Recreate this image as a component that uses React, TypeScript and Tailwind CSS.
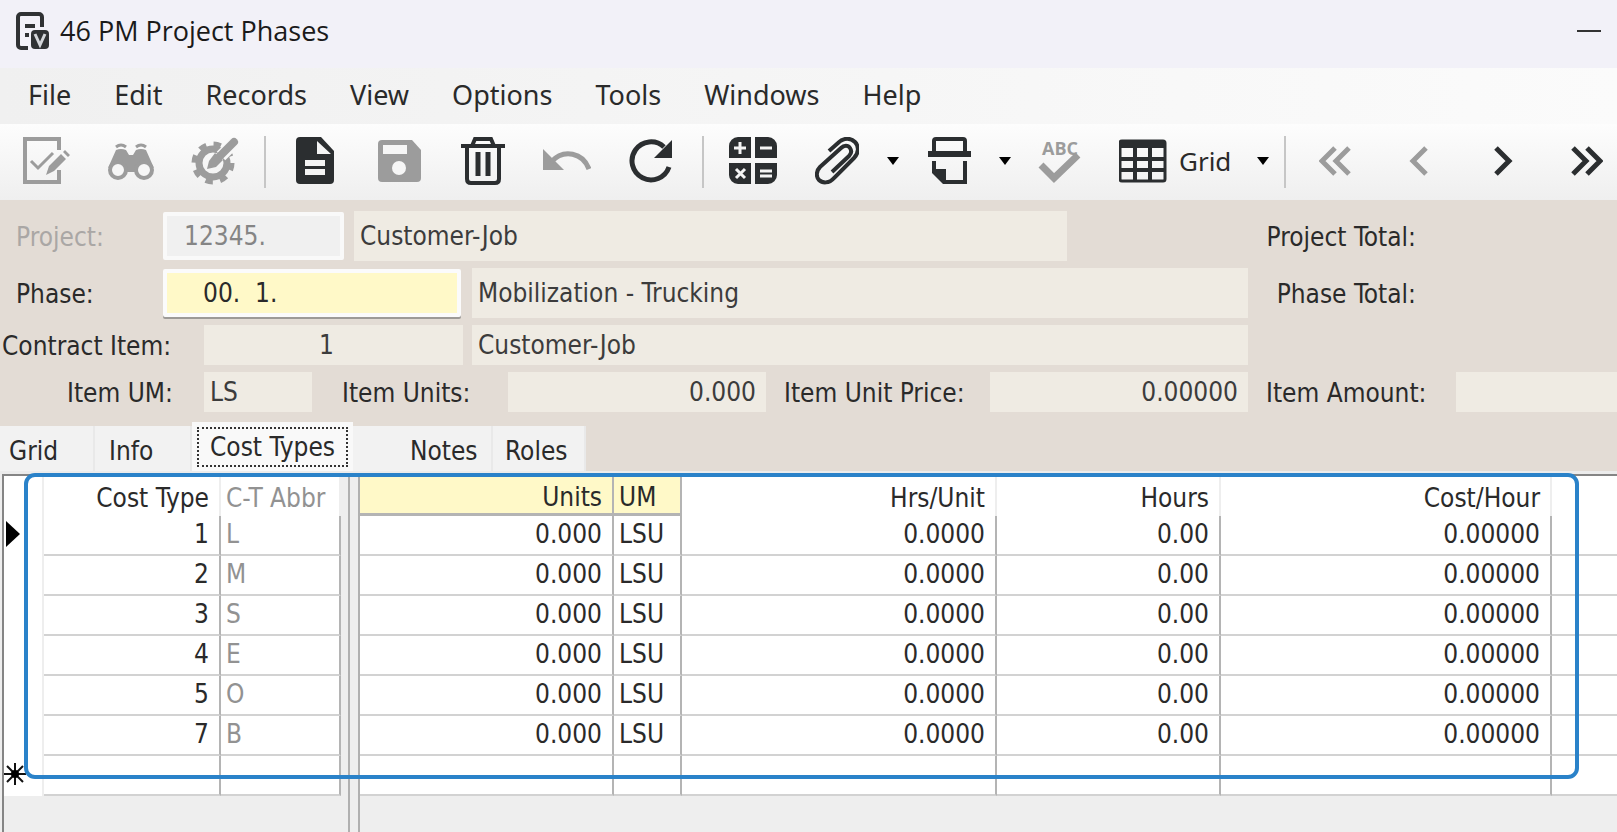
import React from 'react';
import { clsx } from 'clsx';

const menus = ['File', 'Edit', 'Records', 'View', 'Options', 'Tools', 'Windows', 'Help'];

const costTypes = [
  { id: 1, abbr: 'L' },
  { id: 2, abbr: 'M' },
  { id: 3, abbr: 'S' },
  { id: 4, abbr: 'E' },
  { id: 5, abbr: 'O' },
  { id: 7, abbr: 'B' },
];

type IconProps = { children: React.ReactNode; muted?: boolean; width?: number };

const Icon = ({ children, muted, width = 48 }: IconProps) => (
  <svg
    width={width}
    height="48"
    viewBox={`0 0 ${width} 48`}
    fill="none"
    className={clsx('shrink-0', muted ? 'text-[#9c9c9c]' : 'text-[#2b2e30]')}
    aria-hidden="true"
  >
    {children}
  </svg>
);

const AppIcon = () => (
  <svg width="34" height="38" viewBox="0 0 34 38" fill="none" aria-hidden="true">
    <path d="M26 15V5a3 3 0 0 0-3-3H5a3 3 0 0 0-3 3v28a3 3 0 0 0 3 3h7" stroke="#303234" strokeWidth="4" />
    <path d="M9 14h10M9 23h4" stroke="#303234" strokeWidth="4" />
    <rect x="15" y="18" width="18" height="19" rx="4" fill="#303234" />
    <path d="m19 22 5 11 5-11" stroke="#d4d6da" strokeWidth="3" />
  </svg>
);

const EditIcon = () => (
  <Icon muted>
    <path d="M36 13V2H2v43h34V33" stroke="currentColor" strokeWidth="4" />
    <path d="m8 24 7 7 15-15" stroke="currentColor" strokeWidth="3" />
    <path d="m23 38 3-9 12-12 5 5-12 12zM40 15l2-2 5 5-2 2z" fill="currentColor" />
  </Icon>
);

const FindIcon = () => (
  <Icon muted>
    <path d="M9 10q5-4 10 0M29 10q5-4 10 0" stroke="currentColor" strokeWidth="3" />
    <path d="M9 13q5-2 10 0l3 5h4l3-5q5-2 10 0l8 18-10-4-9 8h-8l-9-8-10 4z" fill="currentColor" />
    <circle cx="11" cy="33" r="8" fill="#f6f6f6" stroke="currentColor" strokeWidth="4" />
    <circle cx="37" cy="33" r="8" fill="#f6f6f6" stroke="currentColor" strokeWidth="4" />
  </Icon>
);

const SetupIcon = () => (
  <Icon muted>
    <circle cx="22" cy="26" r="14" stroke="currentColor" strokeWidth="7" />
    <circle cx="22" cy="26" r="19" stroke="currentColor" strokeWidth="5" strokeDasharray="7.460 7.460" />
    <path d="M44 5 30 19" stroke="#f8f8f8" strokeWidth="12" />
    <path d="M43 5 28 20" stroke="currentColor" strokeWidth="8" strokeLinecap="round" />
    <path d="m24 16 8 7-7 7-9 2 2-8z" fill="currentColor" />
  </Icon>
);

const NewIcon = () => (
  <Icon width={38}>
    <path d="M4 0h21l13 14v29a4 4 0 0 1-4 4H4a4 4 0 0 1-4-4V4a4 4 0 0 1 4-4z" fill="currentColor" />
    <path d="M21 4v13h14zM9 23h20v6H9zM9 32h20v6H9z" fill="#f4f4f4" />
  </Icon>
);

const SaveIcon = () => (
  <Icon muted width={43}>
    <path d="M4 3h30l9 10v28a4 4 0 0 1-4 4H4a4 4 0 0 1-4-4V7a4 4 0 0 1 4-4z" fill="currentColor" />
    <path d="M5 8h24v9H5z" fill="#f6f6f6" />
    <circle cx="21" cy="31" r="7" fill="#f6f6f6" />
  </Icon>
);

const DeleteIcon = () => (
  <Icon width={44}>
    <path d="M0 9h44M11 9l3-7h16l3 7" stroke="currentColor" strokeWidth="4" />
    <path d="M6 10v32q0 4 4 4h24q4 0 4-4V10" stroke="currentColor" strokeWidth="4" />
    <path d="M17 15v24M27 15v24" stroke="currentColor" strokeWidth="5" />
  </Icon>
);

const UndoIcon = () => (
  <Icon muted>
    <path d="M0 12v21h21z" fill="currentColor" />
    <path d="M8 25C21 11 40 16 46 32" stroke="currentColor" strokeWidth="5" />
  </Icon>
);

const RefreshIcon = () => (
  <Icon width={44}>
    <path d="M35 10A19 19 0 1 0 40 30" stroke="currentColor" strokeWidth="5" />
    <path d="M43 3v18H25z" fill="currentColor" />
  </Icon>
);

const CalcIcon = () => (
  <Icon>
    <path
      d="M9 0h13v21H0V9a9 9 0 0 1 9-9zM26 0h13a9 9 0 0 1 9 9v12H26zM0 26h22v21H9a9 9 0 0 1-9-9zM26 26h22v12a9 9 0 0 1-9 9H26z"
      fill="currentColor"
    />
    <path d="M5 11h12M11 5v12M31 11h12M31 34h12M31 39h12M7 32l9 9M16 32l-9 9" stroke="#f4f4f4" strokeWidth="3" />
  </Icon>
);

const AttachIcon = () => (
  <Icon width={44}>
    <path
      d="m14 14 9-8C29 0 36 1 40 5s4 11-1 16L19 41c-5 6-12 5-15 2s-3-9 1-13l21-19c3-3 7-3 9 0s1 6-1 8L17 35"
      stroke="currentColor"
      strokeWidth="4"
    />
  </Icon>
);

const PrintIcon = () => (
  <Icon width={43}>
    <path d="M6 15V4q0-2 2-2h27q2 0 2 2v11" stroke="currentColor" strokeWidth="4" />
    <path d="M0 14h43v6H0z" fill="currentColor" />
    <path d="M6 24v10M37 24v21H17" stroke="currentColor" strokeWidth="4" />
    <path d="M4 32h14v15h-3L4 36z" fill="currentColor" />
  </Icon>
);

const SpellIcon = () => (
  <Icon muted>
    <path d="m4 28 13 13 24-23" stroke="currentColor" strokeWidth="7" />
    <text x="5" y="18" fontSize="18" fontWeight="700" fill="currentColor" className="font-['Open_Sans',sans-serif]">
      ABC
    </text>
  </Icon>
);

const GridIcon = () => (
  <Icon>
    <rect x="1" y="4" width="45" height="40" rx="2" stroke="currentColor" strokeWidth="3" />
    <path d="M1 4h45v7H1z" fill="currentColor" />
    <path d="M16 10v34M31 10v34M1 22h45M1 33h45" stroke="currentColor" strokeWidth="4" />
  </Icon>
);

const Chevrons = ({ left, double, muted }: { left?: boolean; double?: boolean; muted?: boolean }) => (
  <Icon muted={muted} width={32}>
    {double ? (
      <path d={left ? 'M16 11 3 24l13 13M30 11 17 24l13 13' : 'm2 11 13 13L2 37M16 11l13 13-13 13'} stroke="currentColor" strokeWidth="5" />
    ) : (
      <path d={left ? 'M23 11 10 24l13 13' : 'm9 11 13 13L9 37'} stroke="currentColor" strokeWidth="5" />
    )}
  </Icon>
);

const ToolButton = ({ label, disabled, children }: { label: string; disabled?: boolean; children: React.ReactNode }) => (
  <button type="button" aria-label={label} disabled={disabled} className="flex w-[84px] shrink-0 items-center justify-center pb-[3px]">
    {children}
  </button>
);

const Caret = ({ label }: { label: string }) => (
  <button type="button" aria-label={label} className="flex w-7 shrink-0 items-center justify-center pb-[2px]">
    <svg width="12" height="8" viewBox="0 0 12 8" aria-hidden="true">
      <path d="M0 0h12L6 8z" fill="#000" />
    </svg>
  </button>
);

const Divider = () => (
  <div className="flex w-4 shrink-0 justify-center">
    <div className="h-[52px] w-[2px] bg-[#c6c6c6]" />
  </div>
);

const Toolbar = () => (
  <div className="flex items-center overflow-hidden bg-linear-to-b from-[#fdfdfd] to-[#efefef] py-3 pl-[5px]">
    <ToolButton label="Validate" disabled><EditIcon /></ToolButton>
    <ToolButton label="Find" disabled><FindIcon /></ToolButton>
    <ToolButton label="Setup" disabled><SetupIcon /></ToolButton>
    <Divider />
    <ToolButton label="New"><NewIcon /></ToolButton>
    <ToolButton label="Save" disabled><SaveIcon /></ToolButton>
    <ToolButton label="Delete"><DeleteIcon /></ToolButton>
    <ToolButton label="Undo" disabled><UndoIcon /></ToolButton>
    <ToolButton label="Refresh"><RefreshIcon /></ToolButton>
    <div className="pl-[2px]"><Divider /></div>
    <ToolButton label="Calculator"><CalcIcon /></ToolButton>
    <ToolButton label="Attachments"><AttachIcon /></ToolButton>
    <Caret label="Attachment options" />
    <ToolButton label="Print"><PrintIcon /></ToolButton>
    <Caret label="Print options" />
    <ToolButton label="Spelling" disabled><SpellIcon /></ToolButton>
    <button type="button" className="flex shrink-0 items-center gap-3 px-4 pb-[3px] font-['Noto_Sans',sans-serif] text-[26px]">
      <GridIcon />
      <span className="w-[54px] text-left">Grid</span>
    </button>
    <Caret label="Grid options" />
    <Divider />
    <ToolButton label="First" disabled><Chevrons left double muted /></ToolButton>
    <ToolButton label="Previous" disabled><Chevrons left muted /></ToolButton>
    <ToolButton label="Next"><Chevrons /></ToolButton>
    <ToolButton label="Last"><Chevrons double /></ToolButton>
  </div>
);

const field = 'block min-w-0 bg-[#efebe3] px-[6px] text-[#3c3c3c] outline-none';
const label = 'shrink-0 pt-[2px] whitespace-nowrap';

const Header = () => (
  <form className="flex flex-col gap-[7px] bg-[#e3dcd5] pt-[11px]">
    <div className="flex h-[50px] items-center">
      <label htmlFor="project" className={clsx(label, 'w-[163px] pl-4 text-[#aaa7a5]')}>Project:</label>
      <input id="project" disabled defaultValue="12345." className="h-12 w-[181px] shrink-0 rounded-xs border-4 border-[#f9f9f9] bg-[#f0f0f0] pl-[17px] text-[#858585]" />
      <input aria-label="Project description" readOnly value="Customer-Job" className={clsx(field, 'mr-[181px] ml-[10px] h-[50px] flex-1')} />
      <span className={clsx(label, 'mr-[201px] w-[168px] text-right')}>Project Total:</span>
    </div>
    <div className="flex h-[50px] items-center">
      <label htmlFor="phase" className={clsx(label, 'w-[163px] pl-4')}>Phase:</label>
      <input id="phase" defaultValue="00.  1." className="h-12 w-[298px] shrink-0 rounded-xs border-4 border-[#fbfbfb] bg-[#fff9c8] pl-9 shadow-[0_2px_0_#9d9a97] outline-none" />
      <input aria-label="Phase description" readOnly value="Mobilization - Trucking" className={clsx(field, 'ml-[11px] h-[50px] flex-1')} />
      <span className={clsx(label, 'mr-[201px] w-[168px] text-right')}>Phase Total:</span>
    </div>
    <div className="flex h-10 items-center">
      <label htmlFor="item" className={clsx(label, 'w-[204px] pl-[2px]')}>Contract Item:</label>
      <input id="item" readOnly value="1" className={clsx(field, 'h-10 w-[259px] shrink-0 pr-5 text-center')} />
      <input aria-label="Contract item description" readOnly value="Customer-Job" className={clsx(field, 'mr-[369px] ml-[9px] h-10 flex-1')} />
    </div>
    <div className="flex h-10 items-center">
      <label htmlFor="um" className={clsx(label, 'w-[204px] pl-[67px]')}>Item UM:</label>
      <input id="um" readOnly value="LS" className={clsx(field, 'h-10 w-[108px] shrink-0')} />
      <label htmlFor="units" className={clsx(label, 'w-[196px] pl-[30px]')}>Item Units:</label>
      <input id="units" readOnly value="0.000" className={clsx(field, 'h-10 w-[258px] shrink-0 pr-[10px] text-right')} />
      <label htmlFor="price" className={clsx(label, 'w-[224px] pl-[18px]')}>Item Unit Price:</label>
      <input id="price" readOnly value="0.00000" className={clsx(field, 'h-10 w-[258px] shrink-0 pr-[10px] text-right')} />
      <label htmlFor="amount" className={clsx(label, 'w-[208px] pl-[18px]')}>Item Amount:</label>
      <input id="amount" readOnly value="" className={clsx(field, 'h-10 flex-1')} />
    </div>
    <Tabs />
  </form>
);

const tab = 'h-[45px] border-r-2 border-[#e9e9e9] bg-[#f2f2f2] pt-1 text-left';

const Tabs = () => (
  <div role="tablist" className="mt-[3px] flex items-end border-b-3 border-[#ececec]">
    <button type="button" role="tab" className={clsx(tab, 'w-[95px] pl-[9px]')}>Grid</button>
    <button type="button" role="tab" className={clsx(tab, 'w-[97px] pl-[14px]')}>Info</button>
    <button type="button" role="tab" aria-selected="true" className="h-[49px] w-[161px] bg-[#f9f9f9] px-[5px]">
      <span className="flex h-10 items-center justify-center border-2 border-dotted border-[#333]">Cost Types</span>
    </button>
    <button type="button" role="tab" className={clsx(tab, 'w-[140px] pl-[57px]')}>Notes</button>
    <button type="button" role="tab" className={clsx(tab, 'w-[93px] pl-3')}>Roles</button>
  </div>
);

const th = 'h-10 border-r-2 border-[#eee] pt-1 font-normal leading-none';
const thEdit = 'h-10 border-r-2 border-b-3 border-[#b4b4b4] bg-[#fff9c8] pt-1 font-normal leading-none';
const td = 'h-10 border-r-2 border-b-2 border-r-[#b4b4b4] border-b-[#d2d2d2] pb-[2px] leading-none';
const num = 'px-[10px] text-right';
const txt = 'px-[5px] text-left';
const table = 'table-fixed border-separate border-spacing-0 bg-white';

const CostTypeGrid = () => (
  <div className="relative ml-[2px] flex flex-1 border-t-2 border-l-2 border-[#858585] bg-[#eee]">
    <div className="w-[344px] shrink-0">
      <table className={clsx(table, 'w-[337px]')}>
        <thead>
          <tr>
            <th aria-label="Row" className="w-10 border-r-2 border-[#eee]" />
            <th className={clsx(th, num, 'w-[177px]')}>Cost Type</th>
            <th className={clsx(th, txt, 'w-[120px] text-[#929292]')}>C-T Abbr</th>
          </tr>
        </thead>
        <tbody>
          {costTypes.map((row, index) => (
            <tr key={row.id}>
              <td className="border-r-2 border-[#eee]">
                {index === 0 && (
                  <svg width="14" height="26" viewBox="0 0 14 26" className="mb-1 ml-[2px]" aria-hidden="true">
                    <path d="M0 0v26l14-13z" fill="#000" />
                  </svg>
                )}
              </td>
              <td className={clsx(td, num)}>{row.id}</td>
              <td className={clsx(td, txt, 'text-[#929292]')}>{row.abbr}</td>
            </tr>
          ))}
          <tr>
            <td className="border-r-2 border-[#eee]">
              <svg width="22" height="22" viewBox="0 0 22 22" className="mb-1" aria-hidden="true">
                <path d="M11 0v22M0 11h22M3 3l16 16M19 3 3 19" stroke="#111" strokeWidth="2" />
                <circle cx="11" cy="11" r="4" fill="#000" />
              </svg>
            </td>
            <td className={td} />
            <td className={td} />
          </tr>
        </tbody>
      </table>
    </div>
    <div className="w-3 shrink-0 border-x-2 border-[#b0b0b0] bg-[#eee]" />
    <div className="min-w-0 flex-1">
      <table className={clsx(table, 'w-full')}>
        <thead>
          <tr>
            <th className={clsx(thEdit, num, 'w-[254px]')}>Units</th>
            <th className={clsx(thEdit, txt, 'w-[68px]')}>UM</th>
            <th className={clsx(th, num, 'w-[315px]')}>Hrs/Unit</th>
            <th className={clsx(th, num, 'w-[224px]')}>Hours</th>
            <th className={clsx(th, num, 'w-[331px]')}>Cost/Hour</th>
            <th aria-label="More" />
          </tr>
        </thead>
        <tbody>
          {costTypes.map((row) => (
            <tr key={row.id}>
              <td className={clsx(td, num)}>0.000</td>
              <td className={clsx(td, txt)}>LSU</td>
              <td className={clsx(td, num)}>0.0000</td>
              <td className={clsx(td, num)}>0.00</td>
              <td className={clsx(td, num)}>0.00000</td>
              <td className="border-b-2 border-[#d2d2d2]" />
            </tr>
          ))}
          <tr>
            <td className={td} />
            <td className={td} />
            <td className={td} />
            <td className={td} />
            <td className={td} />
            <td className="border-b-2 border-[#d2d2d2]" />
          </tr>
        </tbody>
      </table>
    </div>
    {/* Callout frame laid over the editable rows */}
    <div className="pointer-events-none absolute -top-[3px] right-[38px] bottom-[53px] left-5 rounded-[11px] border-4 border-[#2a82c9]" />
  </div>
);

export default function App() {
  return (
    <div className="flex min-h-screen flex-col bg-[#eee] font-['DejaVu_Sans_Condensed','Noto_Sans',sans-serif] text-[26px] leading-8 text-[#2a2a2a]">
      <header className="flex h-[68px] items-center gap-[10px] bg-[#f2f1f8] pr-4 pb-[6px] pl-4 font-['Open_Sans',sans-serif] text-[27px] text-[#1a1a1a]">
        <AppIcon />
        <h1>46 PM Project Phases</h1>
        <button type="button" aria-label="Minimize" className="ml-auto flex h-8 w-[24px] items-center">
          <span className="h-[2px] w-full bg-[#333]" />
        </button>
      </header>
      <nav className="flex h-14 items-center gap-[43px] bg-linear-to-r from-[#f0f0f0] to-[#fbfbfb] pb-[2px] pl-7 font-['Noto_Sans',sans-serif] text-[27px]">
        {menus.map((menu) => (
          <button key={menu} type="button">{menu}</button>
        ))}
      </nav>
      <Toolbar />
      <Header />
      <CostTypeGrid />
    </div>
  );
}
